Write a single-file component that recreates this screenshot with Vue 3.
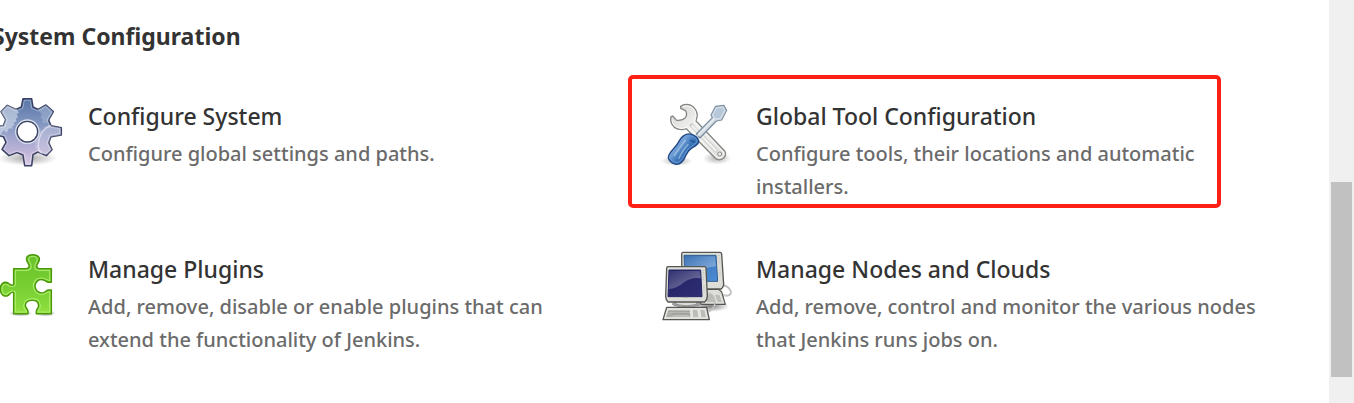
<script setup>
const items = [
  { id: 'gear', title: 'Configure System', text: 'Configure global settings and paths.' },
  { id: 'tools', title: 'Global Tool Configuration', text: 'Configure tools, their locations and automatic installers.', marked: true },
  { id: 'plugin', title: 'Manage Plugins', text: 'Add, remove, disable or enable plugins that can extend the functionality of Jenkins.' },
  { id: 'nodes', title: 'Manage Nodes and Clouds', text: 'Add, remove, control and monitor the various nodes that Jenkins runs jobs on.' },
]
</script>

<template>
  <div class="page">
    <main class="content">
      <h2 class="heading">System Configuration</h2>
      <div class="grid">
        <a v-for="item in items" :key="item.id" href="#" class="card" :class="{ marked: item.marked }">
          <svg v-if="item.id === 'gear'" class="icon" viewBox="-22 33 216 216" aria-hidden="true">
            <defs>
              <linearGradient id="gearFill" x1="0" y1="0" x2="0" y2="1">
                <stop offset="0" stop-color="#5674a6" />
                <stop offset="0.45" stop-color="#8d9dc6" />
                <stop offset="0.75" stop-color="#b9b0d6" />
                <stop offset="1" stop-color="#d9cbe4" />
              </linearGradient>
              <radialGradient id="gearShade">
                <stop offset="0" stop-color="#000" stop-opacity="0.35" />
                <stop offset="1" stop-color="#000" stop-opacity="0" />
              </radialGradient>
              <clipPath id="gearClip">
                <path d="M71 41H97L101 66L116 73L140 60L162 80L148 105L155 122L186 128V150L155 155L148 173L158 194L141 212L116 201L101 209L97 242H76L71 210L53 203L29 212L8 193L20 172L12 155L-17 150V128L12 122L19 104L5 80L24 61L50 73L66 66Z" />
              </clipPath>
            </defs>
            <ellipse cx="84" cy="220" rx="90" ry="22" fill="url(#gearShade)" />
            <path d="M71 41H97L101 66L116 73L140 60L162 80L148 105L155 122L186 128V150L155 155L148 173L158 194L141 212L116 201L101 209L97 242H76L71 210L53 203L29 212L8 193L20 172L12 155L-17 150V128L12 122L19 104L5 80L24 61L50 73L66 66Z" fill="url(#gearFill)" stroke="#3b4163" stroke-width="4.5" stroke-linejoin="round" />
            <g clip-path="url(#gearClip)">
              <path d="M-17 50H36L55 77L59 83L52 88L56 96L49 102L52 109L43 113L46 121L38 124L40 131L29 130L22 143L13 136L5 147H-17Z" fill="#dce6ef" opacity="0.55" />
              <path d="M188 122H144L135 126L131 134L121 137L118 145L111 154L112 164L104 169L110 180L106 187L115 196L112 207H188Z" fill="#d8d6e8" opacity="0.35" />
              <path d="M156 121Q121 133 117 178Q116 198 132 213" fill="none" stroke="#e2e2f1" stroke-width="4" opacity="0.8" />
              <path d="M115 73L128 89L123 97L131 104L127 111L139 116L147 106L163 79L140 59Z" fill="#a6b9d4" opacity="0.5" />
            </g>
            <path d="M75 46H93L97 70L116 78L139 65L157 81L143 105L151 126L181 131V146L151 151L143 174L153 193L140 207L116 196L97 205L93 237H80L75 206L53 198L30 207L14 192L25 172L17 151L-17 146V131L17 126L24 104L11 80L25 66L50 78L70 70Z" fill="none" stroke="#fff" stroke-width="3" opacity="0.35" />
            <circle cx="84" cy="140" r="33" fill="#fff" stroke="#d6deec" stroke-width="8" />
            <circle cx="84" cy="140" r="31" fill="#fff" stroke="#3b4163" stroke-width="4" />
          </svg>

          <svg v-else-if="item.id === 'tools'" class="icon" viewBox="15 18 216 216" aria-hidden="true">
            <defs>
              <linearGradient id="steel" x1="0" y1="0" x2="1" y2="1">
                <stop offset="0" stop-color="#d0d0ce" />
                <stop offset="0.45" stop-color="#f6f6f5" />
                <stop offset="1" stop-color="#dadad7" />
              </linearGradient>
              <linearGradient id="handle" x1="0" y1="0" x2="1" y2="0.8">
                <stop offset="0" stop-color="#2b5f9f" />
                <stop offset="0.38" stop-color="#78a6db" />
                <stop offset="0.6" stop-color="#3b75b9" />
                <stop offset="1" stop-color="#245494" />
              </linearGradient>
              <radialGradient id="toolShade">
                <stop offset="0" stop-color="#000" stop-opacity="0.3" />
                <stop offset="1" stop-color="#000" stop-opacity="0" />
              </radialGradient>
            </defs>
            <ellipse cx="65" cy="213" rx="48" ry="15" fill="url(#toolShade)" />
            <ellipse cx="186" cy="205" rx="43" ry="19" fill="url(#toolShade)" />
            <path d="M77 49Q88 40 106 45Q125 54 127 76L123 93L209 183Q216 195 205 205Q193 214 181 205L94 116Q75 123 58 112Q44 98 48 80L53 78L65 91Q82 93 92 82Q98 69 91 62L77 55Z" fill="url(#steel)" stroke="#858783" stroke-width="4" stroke-linejoin="round" />
            <path d="M84 50Q106 43 119 61Q127 76 119 94L205 186Q211 196 202 201Q192 207 184 200L96 112Q73 121 57 106Q51 99 51 88" fill="none" stroke="#fff" stroke-width="3" opacity="0.8" />
            <path d="M110 106L182 181" stroke="#c5c5c1" stroke-width="12" stroke-linecap="round" />
            <path d="M112 108L182 181" stroke="#efefed" stroke-width="8" stroke-linecap="round" />
            <circle cx="194" cy="192" r="6" fill="#eee" stroke="#8a8b88" stroke-width="3" />
            <path d="M124 132L172 83L168 75L182 49L206 46L215 61L200 90L184 93L135 144Z" fill="#d1dae3" stroke="#7b8c9e" stroke-width="3.5" stroke-linejoin="round" />
            <path d="M173 75L184 54L203 51L209 61L196 85L182 87Z" fill="#b6c8d9" stroke="#d5e0ea" stroke-width="3" />
            <path d="M128 137L178 87" stroke="#e8edf2" stroke-width="4" />
            <path d="M86 137Q97 129 110 133Q128 139 131 153Q132 161 119 169Q102 177 92 197Q82 223 64 223Q47 221 40 205Q38 195 55 177Q68 163 75 149Q79 142 86 137Z" fill="url(#handle)" stroke="#204a87" stroke-width="4" />
            <path d="M88 142Q96 134 109 138Q124 143 127 153Q127 158 115 165Q99 172 88 195Q79 217 65 218Q52 217 45 205Q45 198 59 181Q72 168 79 153Q83 145 88 142Z" fill="none" stroke="#6b9bd2" stroke-width="3" />
            <path d="M58 196L91 151M72 205Q83 180 99 164" fill="none" stroke="#d2e5f7" stroke-width="5" stroke-linecap="round" opacity="0.45" />
            <path d="M104 151L119 156" stroke="#173c74" stroke-width="5" opacity="0.5" />
          </svg>

          <svg v-else-if="item.id === 'plugin'" class="icon" viewBox="-24 12 216 216" aria-hidden="true">
            <defs>
              <linearGradient id="plugFill" x1="0" y1="0" x2="0" y2="1">
                <stop offset="0" stop-color="#68c22a" />
                <stop offset="0.55" stop-color="#78cf32" />
                <stop offset="1" stop-color="#90e040" />
              </linearGradient>
              <radialGradient id="plugShade">
                <stop offset="0" stop-color="#000" stop-opacity="0.45" />
                <stop offset="1" stop-color="#000" stop-opacity="0" />
              </radialGradient>
            </defs>
            <ellipse cx="62" cy="205" rx="36" ry="10" fill="url(#plugShade)" />
            <ellipse cx="136" cy="205" rx="32" ry="10" fill="url(#plugShade)" />
            <path d="M41 71H80C91 68 88 61 84 54C74 39 82 29 98 29C117 29 123 41 114 54C108 63 109 69 116 71H154V112H146C139 112 137 106 131 105C118 101 106 108 105 123C106 139 117 146 131 143C138 141 139 135 146 135H154V206H109V199C109 193 115 190 116 183C116 172 108 166 97 166C84 166 76 172 76 182C77 191 84 192 84 199V206H41V145C38 136 32 145 25 151C14 157 2 150 1 135C0 118 11 108 24 114C33 120 38 125 41 117Z" fill="url(#plugFill)" stroke="#4b9908" stroke-width="4.5" stroke-linejoin="round" />
            <path d="M46 76H82C96 73 96 63 89 52C82 40 87 34 98 34C111 34 116 42 109 52C102 64 102 75 115 76H149V107C141 106 136 99 123 99C108 100 99 110 100 124C101 139 113 149 127 148C138 147 141 141 149 140V201H114C114 195 121 191 121 182C121 169 111 161 97 161C82 161 71 169 71 182C71 192 79 195 79 201H46V142C40 133 30 140 22 146C14 151 6 146 6 134C6 121 12 115 22 119C31 125 41 128 46 120Z" fill="none" stroke="#baf37d" stroke-width="3.5" opacity="0.75" />
          </svg>

          <svg v-else class="icon" viewBox="15 18 216 216" aria-hidden="true">
            <defs>
              <linearGradient id="screenBack" x1="0" y1="0" x2="1" y2="1">
                <stop offset="0" stop-color="#2c66ac" />
                <stop offset="1" stop-color="#4e8ed6" />
              </linearGradient>
              <linearGradient id="screenFront" x1="0" y1="0" x2="1" y2="1">
                <stop offset="0" stop-color="#202064" />
                <stop offset="1" stop-color="#302f74" />
              </linearGradient>
              <linearGradient id="glare" x1="0" y1="0" x2="1" y2="1">
                <stop offset="0" stop-color="#fff" stop-opacity="0.08" />
                <stop offset="1" stop-color="#fff" stop-opacity="0.38" />
              </linearGradient>
              <radialGradient id="pcShade">
                <stop offset="0" stop-color="#000" stop-opacity="0.5" />
                <stop offset="1" stop-color="#000" stop-opacity="0" />
              </radialGradient>
            </defs>
            <ellipse cx="165" cy="190" rx="58" ry="17" fill="url(#pcShade)" />
            <path d="M200 127C222 126 239 154 218 158L204 157" fill="none" stroke="#aaa" stroke-width="5" />
            <path d="M200 127C222 126 239 154 218 158L204 157" fill="none" stroke="#dcdcda" stroke-width="2" />
            <path d="M111 139H191L200 147L211 184H139Z" fill="#ddddda" stroke="#555753" stroke-width="3.5" stroke-linejoin="round" />
            <path d="M152 154H172L181 179H153ZM178 154H194L203 179H187Z" fill="#bcbdb8" stroke="#eeeeec" stroke-width="2" />
            <path d="M84 28H195Q199 28 200 33L206 125Q205 132 199 138H89Q82 135 81 129L80 33Q80 29 84 28Z" fill="#deded9" stroke="#555753" stroke-width="4" />
            <path d="M87 37H183L188 115H90Z" fill="url(#screenBack)" stroke="#315e91" stroke-width="3" />
            <path d="M89 40H180L183 70Q157 70 139 89L90 97Z" fill="url(#glare)" />
            <path d="M192 37V65M195 80V96" stroke="#aaa" stroke-width="3" stroke-dasharray="2 5" />
            <path d="M157 151C173 152 185 169 177 192L162 205" fill="none" stroke="#aaa" stroke-width="5" />
            <path d="M157 151C173 152 185 169 177 192L162 205" fill="none" stroke="#dcdcda" stroke-width="2" />
            <ellipse cx="94" cy="183" rx="42" ry="9" fill="#aaa" stroke="#777" stroke-width="2" />
            <path d="M63 173H125V184Q95 193 63 184Z" fill="#ddddda" stroke="#777" stroke-width="2" />
            <path d="M39 71H149Q153 71 153 76L157 160Q156 172 149 177H39Q33 172 32 160L35 76Q35 72 39 71Z" fill="#deded9" stroke="#555753" stroke-width="4" />
            <path d="M42 81H137L141 161H39Z" fill="url(#screenFront)" stroke="#282768" stroke-width="3" />
            <path d="M44 84H134L137 106Q109 101 84 120Q65 137 41 138Z" fill="url(#glare)" />
            <path d="M145 81V112M147 126V145" stroke="#aaa" stroke-width="3" stroke-dasharray="2 5" />
            <path d="M85 163H98" stroke="#92938f" stroke-width="2" />
            <path d="M35 193H155L163 230H24Z" fill="#e0e0dc" stroke="#555753" stroke-width="4" stroke-linejoin="round" />
            <path d="M39 199H106L108 224H31ZM111 199H128L132 224H113ZM134 199H149L155 224H138Z" fill="#bcbdb8" stroke="#f5f5f2" stroke-width="2" />
            <path d="M39 206H105M37 213H106M35 219H50L54 212H101L105 220" fill="none" stroke="#92938f" stroke-width="2" />
          </svg>

          <div class="copy">
            <h3 class="title">{{ item.title }}</h3>
            <p class="text">{{ item.text }}</p>
          </div>
        </a>
      </div>
    </main>
    <div class="scrollbar" aria-hidden="true"><div class="thumb"></div></div>
  </div>
</template>

<style>
body {
  margin: 0;
  background: #fff;
}
</style>

<style scoped>
.page {
  display: flex;
  min-height: 100vh;
  overflow: hidden;
  font-family: "Noto Sans", "Open Sans", sans-serif;
}
.content {
  flex: 1;
  min-width: 0;
  padding: 20px 57px 0 0;
  margin-left: -8px;
}
.heading {
  margin: 0 0 44px;
  font-size: 23px;
  line-height: 32px;
  font-weight: 700;
  color: #333;
}
.grid {
  display: grid;
  grid-template-columns: repeat(2, minmax(0, 1fr));
  gap: 46px 56px;
}
.card {
  position: relative;
  display: flex;
  gap: 24px;
  min-height: 107px;
  text-decoration: none;
}
.marked::after {
  content: "";
  position: absolute;
  inset: -21px 51px -5px -32px;
  border: 4px solid #ff2015;
  border-radius: 5px;
}
.icon {
  flex: none;
  width: 72px;
  height: 72px;
}
.copy {
  padding-top: 2px;
}
.title {
  margin: 0 0 3px;
  font-size: 23px;
  line-height: 36px;
  font-weight: 500;
  color: #333;
}
.text {
  margin: 0;
  font-size: 20px;
  line-height: 33px;
  font-weight: 500;
  color: #6b6b6b;
}
.scrollbar {
  width: 25px;
  box-sizing: border-box;
  padding: 182px 2px 0;
  background: #f0f0f0;
}
.thumb {
  height: 195px;
  background: #c1c1c1;
}
</style>
